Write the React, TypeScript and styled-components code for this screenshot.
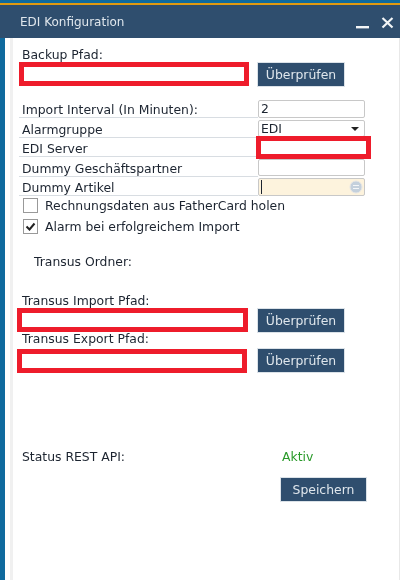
import React from 'react';
import styled, { createGlobalStyle } from 'styled-components';

const Global = createGlobalStyle`
	html, body {
		margin: 0;
		padding: 0;
		background: #fff;
	}
	* {
		box-sizing: border-box;
	}
`;

const Frame = styled.div`
	width: 400px;
	height: 580px;
	display: flex;
	flex-direction: column;
	overflow: hidden;
	background: #fff;
	font-family: "DejaVu Sans", "Noto Sans", sans-serif;
	font-size: 12.4px;
	color: #1c2430;
	border-top: 3px solid #0f6a9e;
	filter: blur(0.3px);
`;

const TitleBar = styled.div`
	flex: 0 0 35px;
	display: flex;
	align-items: center;
	justify-content: space-between;
	padding: 0 6px 0 20px;
	background: #2f4e6e;
	border-top: 2px solid #e09a10;
	color: #dfe6ec;
	font-size: 12px;
`;

const WindowButtons = styled.div`
	display: flex;
	align-items: center;
	gap: 12px;
	padding-top: 2px;
`;

const Body = styled.div`
	flex: 1;
	display: flex;
	border-left: 5px solid #0f6a9e;
	border-right: 1px solid #e8e8e8;
`;

const Form = styled.div`
	flex: 1;
	display: flex;
	flex-direction: column;
	margin-left: 5px;
	padding: 7px 0 0 6px;
	border-left: 3px solid #f0f0f0;
`;

const Label = styled.div<{ $indent?: number; $top?: number; $height?: number; $line?: number }>`
	height: ${(p) => p.$height ?? 17}px;
	line-height: ${(p) => p.$line ?? 19}px;
	margin-top: ${(p) => p.$top ?? 0}px;
	padding-left: ${(p) => p.$indent ?? 3}px;
	white-space: nowrap;
`;

const PathRow = styled.div<{ $shift?: number; $gap?: number }>`
	display: flex;
	align-items: flex-start;
	gap: ${(p) => p.$gap ?? 9}px;
	margin-left: ${(p) => p.$shift ?? 0}px;
`;

const Redacted = styled.div<{ $width: number; $height?: number; $drop?: number }>`
	width: ${(p) => p.$width}px;
	height: ${(p) => p.$height ?? 24}px;
	margin-top: ${(p) => p.$drop ?? 0}px;
	background: #fff;
	border: 5px solid #ee1c2b;
`;

const CheckButton = styled.button<{ $wide?: number }>`
	width: ${(p) => p.$wide ?? 88}px;
	height: 25px;
	padding: 0;
	border: 1px solid #dbe2e8;
	background: #2f4e6e;
	color: #dfe6ec;
	font: inherit;
`;

const FieldGrid = styled.div`
	display: flex;
	flex-direction: column;
	margin-top: 13px;
	width: 346px;
`;

const FieldRow = styled.div`
	position: relative;
	display: flex;
	height: 19.5px;
	align-items: flex-start;
`;

const FieldLabel = styled.div`
	width: 239px;
	height: 18px;
	padding-left: 3px;
	line-height: 19px;
	border-bottom: 1px solid #d8dde2;
	white-space: nowrap;
`;

const FieldInput = styled.div<{ $active?: boolean }>`
	position: relative;
	width: 107px;
	height: 17.5px;
	display: flex;
	align-items: center;
	padding-left: 2px;
	border: 1px solid #c8c8c8;
	border-radius: 2px;
	background: ${(p) => (p.$active ? '#fdf3dd' : '#fff')};
`;

const ServerRedaction = styled(Redacted)`
	position: absolute;
	left: 237px;
	top: -3px;
	margin: 0;
`;

const Caret = styled.span`
	width: 1px;
	height: 14px;
	background: #1c2430;
`;

const SelectArrow = styled.span`
	position: absolute;
	right: 5px;
	top: 6px;
	border-left: 4px solid transparent;
	border-right: 4px solid transparent;
	border-top: 4px solid #222;
`;

const LookupIcon = styled.svg`
	position: absolute;
	right: 1px;
	top: 1px;
`;

const Checks = styled.div`
	display: flex;
	flex-direction: column;
	gap: 5px;
`;

const CheckRow = styled.label`
	display: flex;
	align-items: center;
	gap: 7px;
	height: 16px;
	padding-left: 4px;
	white-space: nowrap;
`;

const Box = styled.span`
	width: 15px;
	height: 15px;
	display: flex;
	align-items: center;
	justify-content: center;
	border: 1px solid #999;
	background: #fff;
`;

const StatusRow = styled.div`
	display: flex;
	margin-top: 74px;
	width: 350px;
`;

const StatusLabel = styled.div`
	width: 263px;
	height: 17px;
	line-height: 19px;
	padding-left: 3px;
`;

const StatusValue = styled.div`
	line-height: 19px;
	color: #2a9a2a;
`;

const SaveRow = styled.div`
	display: flex;
	justify-content: flex-end;
	margin-top: 11px;
	width: 348px;
`;

export default function App() {
	return (
		<Frame>
			<Global />
			<TitleBar>
				<span>EDI Konfiguration</span>
				<WindowButtons>
					<svg width="13" height="12" viewBox="0 0 13 12"><rect x="0" y="9" width="13" height="2.4" fill="#f2f5f7" /></svg>
					<svg width="13" height="12" viewBox="0 0 13 12"><path d="M1.5 1l10 9.5M11.5 1l-10 9.5" stroke="#f2f5f7" strokeWidth="2.2" /></svg>
				</WindowButtons>
			</TitleBar>
			<Body>
				<Form>
					<Label>Backup Pfad:</Label>
					<PathRow $gap={8}>
						<Redacted $width={230} />
						<CheckButton>Überprüfen</CheckButton>
					</PathRow>
					<FieldGrid>
						<FieldRow>
							<FieldLabel>Import Interval (In Minuten):</FieldLabel>
							<FieldInput>2</FieldInput>
						</FieldRow>
						<FieldRow>
							<FieldLabel>Alarmgruppe</FieldLabel>
							<FieldInput>EDI<SelectArrow /></FieldInput>
						</FieldRow>
						<FieldRow>
							<FieldLabel>EDI Server</FieldLabel>
							<FieldInput />
							<ServerRedaction $width={115} $height={23} />
						</FieldRow>
						<FieldRow>
							<FieldLabel>Dummy Geschäftspartner</FieldLabel>
							<FieldInput />
						</FieldRow>
						<FieldRow>
							<FieldLabel>Dummy Artikel</FieldLabel>
							<FieldInput $active>
								<Caret />
								<LookupIcon width="14" height="14" viewBox="0 0 14 14">
									<circle cx="7" cy="7" r="6" fill="#c4d0dc" stroke="#e6e6e6" />
									<path d="M4 5.5h6M4 8.5h6" stroke="#f4f6f8" strokeWidth="1.2" />
								</LookupIcon>
							</FieldInput>
						</FieldRow>
					</FieldGrid>
					<Checks>
						<CheckRow><Box />Rechnungsdaten aus FatherCard holen</CheckRow>
						<CheckRow>
							<Box>
								<svg width="11" height="11" viewBox="0 0 11 11"><path d="M1.5 5.5l3 3 5-6" fill="none" stroke="#222" strokeWidth="2" /></svg>
							</Box>
							Alarm bei erfolgreichem Import
						</CheckRow>
					</Checks>
					<Label $indent={15} $top={17}>Transus Ordner:</Label>
					<Label $top={22}>Transus Import Pfad:</Label>
					<PathRow $shift={-2}>
						<Redacted $width={231} />
						<CheckButton>Überprüfen</CheckButton>
					</PathRow>
					<Label $height={15} $line={12}>Transus Export Pfad:</Label>
					<PathRow $shift={-2} $gap={10}>
						<Redacted $width={230} $drop={1} />
						<CheckButton>Überprüfen</CheckButton>
					</PathRow>
					<StatusRow>
						<StatusLabel>Status REST API:</StatusLabel>
						<StatusValue>Aktiv</StatusValue>
					</StatusRow>
					<SaveRow>
						<CheckButton $wide={87}>Speichern</CheckButton>
					</SaveRow>
				</Form>
			</Body>
		</Frame>
	);
}
